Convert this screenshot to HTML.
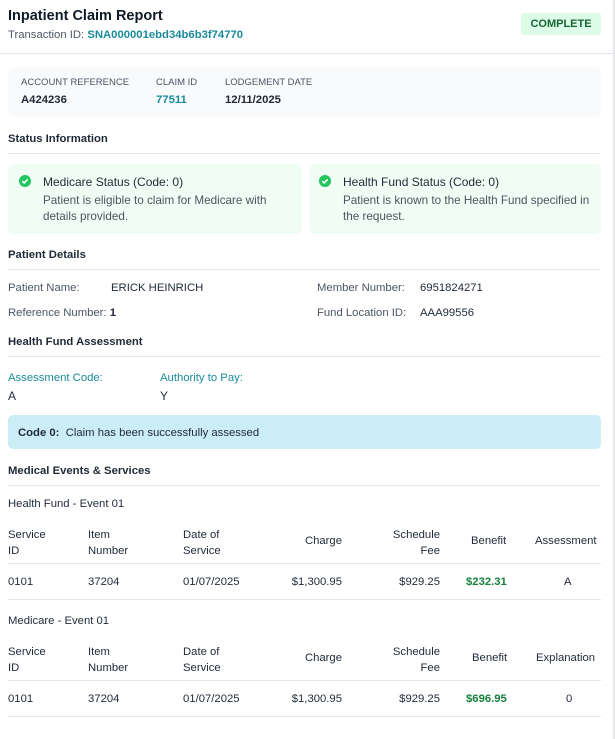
<!DOCTYPE html><html><head><style>
*{margin:0;padding:0;box-sizing:border-box}
body{width:615px;height:739px;background:#fff;font-family:"Liberation Sans",sans-serif;color:#1f2937;position:relative;overflow:hidden;font-size:11.3px}
.a{position:absolute;white-space:nowrap}
.hr{position:absolute;left:8px;width:593px;height:1px;background:#e5e7eb}
.g{color:#4b5563}.t{color:#1b8a9b}.b{font-weight:bold}
.h{font-size:11.3px;font-weight:bold;color:#1f2937}
.gr{color:#15803d;font-weight:bold}
.r{text-align:right}.c{text-align:center}
</style></head><body>
<div class="a" style="right:0;top:0;width:2px;height:739px;background:#e5e7eb"></div>
<div class="a b" style="left:8px;top:8px;font-size:14.5px;color:#111827">Inpatient Claim Report</div>
<div class="a g" style="left:8px;top:29px">Transaction ID: <span class="t b">SNA000001ebd34b6b3f74770</span></div>
<div class="a b" style="left:521px;top:13px;width:80px;height:22px;background:#dcfce7;border-radius:3px;color:#166534;font-size:11px;line-height:22px;text-align:center">COMPLETE</div>
<div class="a" style="left:0;top:53px;width:613px;height:1px;background:#e5e7eb"></div>
<div class="a" style="left:8px;top:67px;width:593px;height:50px;background:#f9fafb;border-radius:6px"></div>
<div class="a g" style="left:21px;top:77px;font-size:9.5px">ACCOUNT REFERENCE</div>
<div class="a g" style="left:156px;top:77px;font-size:9.5px">CLAIM ID</div>
<div class="a g" style="left:225px;top:77px;font-size:9.5px">LODGEMENT DATE</div>
<div class="a b" style="left:21px;top:94px">A424236</div>
<div class="a t b" style="left:156px;top:94px">77511</div>
<div class="a b" style="left:225px;top:94px">12/11/2025</div>
<div class="a h" style="left:8px;top:133px">Status Information</div>
<div class="hr" style="top:153px"></div>
<div class="a" style="left:8px;top:164px;width:294px;height:70px;background:#f0fdf4;border-radius:6px"></div>
<div class="a" style="left:309px;top:164px;width:292px;height:70px;background:#f0fdf4;border-radius:6px"></div>
<svg class="a" style="left:19px;top:175px" width="12" height="12" viewBox="0 0 12 12"><circle cx="6" cy="6" r="6" fill="#22c55e"/><path d="M3.3 6.2l1.8 1.8 3.6-3.7" stroke="#fff" stroke-width="1.6" fill="none"/></svg>
<svg class="a" style="left:319px;top:175px" width="12" height="12" viewBox="0 0 12 12"><circle cx="6" cy="6" r="6" fill="#22c55e"/><path d="M3.3 6.2l1.8 1.8 3.6-3.7" stroke="#fff" stroke-width="1.6" fill="none"/></svg>
<div class="a" style="left:43px;top:175px;font-size:12px">Medicare Status (Code: 0)</div>
<div class="a g" style="left:43px;top:193px;line-height:16px;font-size:11.7px">Patient is eligible to claim for Medicare with<br>details provided.</div>
<div class="a" style="left:343px;top:175px;font-size:12px">Health Fund Status (Code: 0)</div>
<div class="a g" style="left:343px;top:193px;line-height:16px;font-size:11.7px">Patient is known to the Health Fund specified in<br>the request.</div>
<div class="a h" style="left:8px;top:249px">Patient Details</div>
<div class="hr" style="top:269px"></div>
<div class="a g" style="left:8px;top:282px">Patient Name:</div>
<div class="a" style="left:111px;top:282px">ERICK HEINRICH</div>
<div class="a g" style="left:317px;top:282px">Member Number:</div>
<div class="a" style="left:420px;top:282px">6951824271</div>
<div class="a g" style="left:8px;top:307px">Reference Number: <span class="b" style="color:#1f2937">1</span></div>
<div class="a g" style="left:317px;top:307px">Fund Location ID:</div>
<div class="a" style="left:420px;top:307px">AAA99556</div>
<div class="a h" style="left:8px;top:336px">Health Fund Assessment</div>
<div class="hr" style="top:356px"></div>
<div class="a t" style="left:8px;top:372px">Assessment Code:</div>
<div class="a t" style="left:160px;top:372px">Authority to Pay:</div>
<div class="a" style="left:8px;top:389px;font-size:12px">A</div>
<div class="a" style="left:160px;top:389px;font-size:12px">Y</div>
<div class="a" style="left:8px;top:415px;width:593px;height:34px;background:#cbedf5;border-radius:5px"></div>
<div class="a" style="left:18px;top:427px"><b>Code 0:</b>&nbsp; Claim has been successfully assessed</div>
<div class="a h" style="left:8px;top:465px">Medical Events &amp; Services</div>
<div class="hr" style="top:485px"></div>

<div class="a" style="left:8px;top:498px">Health Fund - Event 01</div>
<div class="a" style="left:8px;top:527px;line-height:16px">Service<br>ID</div>
<div class="a" style="left:88px;top:527px;line-height:16px">Item<br>Number</div>
<div class="a" style="left:183px;top:527px;line-height:16px">Date of<br>Service</div>
<div class="a r" style="right:273px;top:535px">Charge</div>
<div class="a r" style="right:175px;top:527px;line-height:16px">Schedule<br>Fee</div>
<div class="a" style="left:471px;top:535px">Benefit</div>
<div class="a" style="left:535px;top:535px">Assessment</div>
<div class="hr" style="top:563px"></div>
<div class="a" style="left:8px;top:576px">0101</div>
<div class="a" style="left:88px;top:576px">37204</div>
<div class="a" style="left:183px;top:576px">01/07/2025</div>
<div class="a" style="right:273px;top:576px">$1,300.95</div>
<div class="a" style="right:175px;top:576px">$929.25</div>
<div class="a gr" style="left:466px;top:576px">$232.31</div>
<div class="a" style="left:564px;top:576px">A</div>
<div class="hr" style="top:599px"></div>

<div class="a" style="left:8px;top:615px">Medicare - Event 01</div>
<div class="a" style="left:8px;top:644px;line-height:16px">Service<br>ID</div>
<div class="a" style="left:88px;top:644px;line-height:16px">Item<br>Number</div>
<div class="a" style="left:183px;top:644px;line-height:16px">Date of<br>Service</div>
<div class="a r" style="right:273px;top:652px">Charge</div>
<div class="a r" style="right:175px;top:644px;line-height:16px">Schedule<br>Fee</div>
<div class="a" style="left:472px;top:652px">Benefit</div>
<div class="a" style="left:536px;top:652px">Explanation</div>
<div class="hr" style="top:680px"></div>
<div class="a" style="left:8px;top:693px">0101</div>
<div class="a" style="left:88px;top:693px">37204</div>
<div class="a" style="left:183px;top:693px">01/07/2025</div>
<div class="a" style="right:273px;top:693px">$1,300.95</div>
<div class="a" style="right:175px;top:693px">$929.25</div>
<div class="a gr" style="left:466px;top:693px">$696.95</div>
<div class="a" style="left:566px;top:693px">0</div>
<div class="hr" style="top:716px"></div>
</body></html>
